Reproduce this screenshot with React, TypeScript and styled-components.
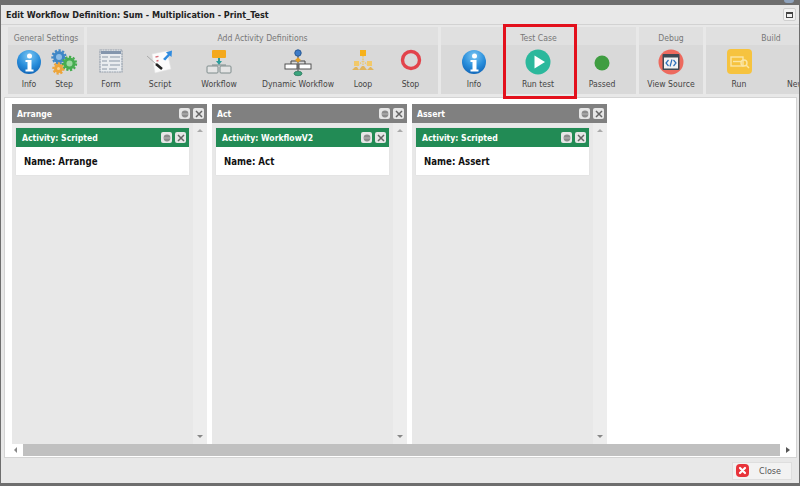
import React from "react";
import styled, { createGlobalStyle } from "styled-components";

const Global = createGlobalStyle`
  html, body {
    margin: 0;
    padding: 0;
    width: 800px;
    height: 486px;
    overflow: hidden;
    background: #6e6e6e;
    font-family: "DejaVu Sans Condensed", "DejaVu Sans", Verdana, sans-serif;
    font-stretch: condensed;
  }
`;

const Page = styled.div`
  position: relative;
  width: 800px;
  height: 486px;
  overflow: hidden;
  display: flex;
  flex-direction: column;
  background: #6e6e6e;
`;

const TopEdge = styled.div`
  height: 5px;
  flex: none;
  display: flex;
  justify-content: flex-end;
  padding-right: 6px;
  &::after {
    content: "";
    width: 10px;
    height: 3px;
    background: #8fa3bd;
    border-radius: 0 0 4px 4px;
  }
`;

const Dialog = styled.div`
  width: 798px;
  height: 478px;
  margin-left: 1px;
  flex: none;
  display: flex;
  flex-direction: column;
  background: #e8e8e8;
  overflow: hidden;
`;

const TitleBar = styled.div`
  height: 19px;
  flex: none;
  display: flex;
  align-items: center;
  justify-content: space-between;
  padding: 0 3px 0 5px;
  border-bottom: 1px solid #d2d2d2;
`;

const Title = styled.div`
  font-weight: bold;
  font-size: 9px;
  color: #222;
`;

const MaxButton = styled.div`
  width: 11px;
  height: 11px;
  display: flex;
  align-items: center;
  justify-content: center;
  background: #f2f2f2;
  border: 1px solid #cfcfcf;
  border-radius: 2px;
  &::after {
    content: "";
    width: 5px;
    height: 3px;
    border: 1px solid #444;
    border-top-width: 2px;
  }
`;

const Toolbar = styled.div`
  display: flex;
  flex: none;
  gap: 3px;
  height: 67px;
  margin: 2px 0 3px 7px;
  width: 900px;
`;

const Group = styled.div<{ $w: number }>`
  width: ${(p) => p.$w}px;
  flex: none;
  background: #e0e0e0;
  display: flex;
  flex-direction: column;
`;

const GroupTitle = styled.div`
  height: 18px;
  line-height: 22px;
  text-align: center;
  font-size: 8.6px;
  color: #777;
`;

const GroupBody = styled.div`
  flex: 1;
  display: flex;
  background: #d9d9d9;
`;

const Tool = styled.div<{ $w: number }>`
  width: ${(p) => p.$w}px;
  flex: none;
  display: flex;
  flex-direction: column;
  align-items: center;
  justify-content: space-between;
  padding: 4px 0 4px;
  box-sizing: border-box;
  svg {
    display: block;
  }
`;

const ToolLabel = styled.div`
  font-size: 8.6px;
  line-height: 12px;
  color: #444;
  white-space: nowrap;
`;

const Highlight = styled.div`
  position: absolute;
  left: 503px;
  top: 24px;
  width: 68px;
  height: 69px;
  border: 3px solid #e3101c;
`;

const Workspace = styled.div`
  flex: 1;
  margin: 0 2px 0 3px;
  background: #fff;
  border: 1px solid #d4d4d4;
  display: flex;
  flex-direction: column;
  min-height: 0;
`;

const Columns = styled.div`
  flex: 1;
  display: flex;
  gap: 5px;
  padding: 6px 0 0 7px;
  min-height: 0;
`;

const Column = styled.div`
  width: 195px;
  display: flex;
  flex-direction: column;
  background: #e8e8e8;
`;

const ColumnHead = styled.div<{ $green?: boolean }>`
  height: 19px;
  flex: none;
  display: flex;
  align-items: center;
  justify-content: space-between;
  padding: 0 3px 0 ${(p) => (p.$green ? 6 : 5)}px;
  background: ${(p) => (p.$green ? "#228b55" : "#808080")};
  color: #fff;
  font-weight: bold;
  font-size: 8.6px;
`;

const HeadButtons = styled.div`
  display: flex;
  gap: 3px;
`;

const HeadButton = styled.div`
  width: 11px;
  height: 11px;
  border-radius: 2px;
  background: #e6e6e6;
  display: flex;
  align-items: center;
  justify-content: center;
  svg {
    display: block;
  }
`;

const ColumnBody = styled.div`
  flex: 1;
  display: flex;
  min-height: 0;
`;

const ColumnInner = styled.div`
  width: 173px;
  padding: 5px 0 0 4px;
`;

const Card = styled.div`
  background: #fff;
  box-shadow: 0 0 1px #cfcfcf;
`;

const CardBody = styled.div`
  height: 28px;
  line-height: 29px;
  padding-left: 8px;
  font-weight: bold;
  font-size: 9.6px;
  color: #111;
`;

const VScroll = styled.div`
  margin-left: 4px;
  width: 14px;
  background: #ededed;
  display: flex;
  flex-direction: column;
  align-items: center;
  justify-content: space-between;
  padding: 6px 0;
`;

const Arrow = styled.div<{ $dir: "up" | "down" | "left" | "right" }>`
  width: 0;
  height: 0;
  border-style: solid;
  border-color: transparent;
  ${(p) =>
    p.$dir === "up"
      ? "border-width: 0 3px 3px; border-bottom-color: #aaa;"
      : p.$dir === "down"
      ? "border-width: 3px 3px 0; border-top-color: #888;"
      : p.$dir === "left"
      ? "border-width: 3px 3px 3px 0; border-right-color: #888;"
      : "border-width: 3px 0 3px 4px; border-left-color: #555;"}
`;

const HScroll = styled.div`
  height: 12px;
  flex: none;
  margin-bottom: 1px;
  display: flex;
  align-items: center;
  padding: 0 6px 0 9px;
  gap: 6px;
`;

const HThumb = styled.div`
  flex: 1;
  height: 12px;
  background: #c0c0c0;
`;

const Footer = styled.div`
  height: 25px;
  flex: none;
  display: flex;
  align-items: center;
  justify-content: flex-end;
  padding: 0 7px 0 0;
`;

const CloseButton = styled.div`
  width: 60px;
  height: 18px;
  box-sizing: border-box;
  display: flex;
  align-items: center;
  gap: 10px;
  padding-left: 3px;
  background: #f2f2f2;
  border: 1px solid #dedede;
  font-size: 9px;
  color: #555;
`;

const InfoIcon = () => (
  <svg width="26" height="26" viewBox="0 0 26 26">
    <defs>
      <radialGradient id="ib" cx="0.5" cy="0.25" r="0.8">
        <stop offset="0" stopColor="#7cc6f2" />
        <stop offset="0.55" stopColor="#2a8fdc" />
        <stop offset="1" stopColor="#0f62b4" />
      </radialGradient>
    </defs>
    <circle cx="13" cy="13" r="12" fill="url(#ib)" />
    <circle cx="13.5" cy="7" r="2.5" fill="#fff" />
    <path d="M9.5 11h6v9.5h2v2h-8v-2h2v-7.500h-2z" fill="#fff" />
  </svg>
);

const Gear = ({ x, y, r, c, hub }: { x: number; y: number; r: number; c: string; hub: string }) => (
  <g>
    <circle cx={x} cy={y} r={r + 0.6} fill="none" stroke={c} strokeWidth="2.2" strokeDasharray="2.2 1.6" />
    <circle cx={x} cy={y} r={r} fill={c} />
    <circle cx={x} cy={y} r={r - 3} fill={hub} />
  </g>
);

const StepIcon = () => (
  <svg width="28" height="26" viewBox="0 0 28 26">
    <Gear x={9} y={8} r={6} c="#3f87c6" hub="#8dbde6" />
    <Gear x={8.500} y={19.500} r={4.500} c="#eda53a" hub="#f7d596" />
    <Gear x={19.5} y={14.500} r={6} c="#46ad4f" hub="#9bd8a0" />
  </svg>
);

const FormIcon = () => (
  <svg width="24" height="24" viewBox="0 0 24 24">
    <rect x="1" y="1" width="22" height="22" fill="#e9ecef" stroke="#97a1ae" strokeWidth="1.2" strokeDasharray="2 .5" />
    <rect x="2" y="2" width="20" height="3" fill="#8496ad" />
    <path d="M3 8h6M11 8h10M3 12h5M10 12h11M3 16h6M11 16h10M3 20h5M10 20h8" stroke="#8a97a6" strokeWidth="1" />
  </svg>
);

const ScriptIcon = () => (
  <svg width="28" height="26" viewBox="0 0 28 26">
    <path d="M6 5l15-3 4 18-16 4z" fill="#fbfbfb" stroke="#e2e2e2" strokeWidth=".6" />
    <path d="M9.500 8l3-.7M10.500 12l2-.5" stroke="#d9707a" strokeWidth="1.300" />
    <path d="M1 7l9 8" stroke="#aaa" strokeWidth="1" />
    <path d="M10 15l6 5" stroke="#222" strokeWidth="2.600" />
    <path d="M17 10l5-5-2.200-1.500 6.200-2-.5 6.500-1.700-1.600-4.600 5.100z" fill="#2f8be0" />
  </svg>
);

const WorkflowIcon = () => (
  <svg width="28" height="26" viewBox="0 0 28 26">
    <rect x="7" y="1" width="14" height="8" rx="1" fill="#f4a91e" />
    <path d="M14 9v5" stroke="#2a9d9b" strokeWidth="2" />
    <path d="M11 12h6l-3 4z" fill="#2a9d9b" />
    <path d="M7 16h14" stroke="#7b8a8a" strokeWidth="1" />
    <rect x="2" y="17" width="11" height="7" rx="1" fill="#e4e4e4" stroke="#7f8c8c" />
    <rect x="15" y="17" width="11" height="7" rx="1" fill="#e4e4e4" stroke="#7f8c8c" />
  </svg>
);

const DynamicIcon = () => (
  <svg width="28" height="28" viewBox="0 0 28 28">
    <path d="M14 7v15M7 12h14M7 12v3M21 12v3" stroke="#444" strokeWidth="1" fill="none" />
    <circle cx="14" cy="4" r="3.200" fill="#3d7cc9" stroke="#2a5a93" />
    <path d="M14 8.500l3 2.500-3 2.500-3-2.500z" fill="#e6a024" />
    <rect x="1" y="15" width="12" height="5" fill="#fff" stroke="#444" strokeWidth=".9" />
    <rect x="15" y="15" width="12" height="5" fill="#fff" stroke="#444" strokeWidth=".9" />
    <ellipse cx="14" cy="24.500" rx="4" ry="2.200" fill="#3ca57e" stroke="#267257" strokeWidth=".7" />
  </svg>
);

const LoopIcon = () => (
  <svg width="24" height="24" viewBox="0 0 24 24">
    <rect x="9" y="1" width="6" height="6" fill="#f7b21b" />
    <path d="M12 7v5M12 12L6 17M12 12l6 5M12 12v8" stroke="#e8c97a" strokeWidth="1.500" strokeDasharray="1.500 1" fill="none" />
    <rect x="3" y="12" width="5" height="5" fill="#f2c96a" />
    <rect x="16" y="12" width="5" height="5" fill="#f2c96a" />
    <path d="M1 21l3-3h2l2 3zM8 21l3-4h2l3 4zM16 21l3-3h1l3 3z" fill="#e2b65c" />
  </svg>
);

const StopIcon = () => (
  <svg width="22" height="22" viewBox="0 0 22 22">
    <circle cx="11" cy="11" r="8.500" fill="none" stroke="#e2434b" strokeWidth="3.400" />
  </svg>
);

const RunIcon = () => (
  <svg width="26" height="26" viewBox="0 0 26 26">
    <circle cx="13" cy="13" r="12.500" fill="#2bb89c" />
    <path d="M9.500 6.500L20 13 9.500 19.500z" fill="#fff" />
  </svg>
);

const PassedIcon = () => (
  <svg width="26" height="26" viewBox="0 0 26 26">
    <circle cx="13" cy="14" r="7.500" fill="#3f9d41" />
  </svg>
);

const SourceIcon = () => (
  <svg width="26" height="26" viewBox="0 0 26 26">
    <circle cx="13" cy="13" r="12.500" fill="#ed6a5e" />
    <rect x="4.500" y="5" width="17" height="16" rx="1" fill="#3e4a55" />
    <rect x="6" y="8.500" width="14" height="11" fill="#f2f2f2" />
    <path d="M10.500 11l-2.500 3 2.500 3M15.500 11l2.500 3-2.500 3" stroke="#2c6fbb" strokeWidth="1.200" fill="none" />
    <path d="M14 10.500l-2 7" stroke="#2c6fbb" strokeWidth="1.200" />
  </svg>
);

const BuildRunIcon = () => (
  <svg width="25" height="25" viewBox="0 0 25 25">
    <rect width="25" height="25" rx="4" fill="#f6c33f" />
    <rect x="4" y="8" width="12" height="9" fill="none" stroke="#fbe6a5" strokeWidth="1.400" />
    <path d="M6 12.500h8" stroke="#fbe6a5" strokeWidth="1.400" />
    <circle cx="17" cy="14" r="3" fill="none" stroke="#fbe6a5" strokeWidth="1.400" />
    <path d="M19 16l3 3" stroke="#fbe6a5" strokeWidth="1.400" />
  </svg>
);

const NewIcon = () => <svg width="25" height="25" viewBox="0 0 25 25" />;

const CloseIcon = () => (
  <svg width="13" height="13" viewBox="0 0 13 13">
    <rect width="13" height="13" rx="4" fill="#e8333a" />
    <path d="M4 4l5 5M9 4l-5 5" stroke="#fff" strokeWidth="2.200" strokeLinecap="round" />
  </svg>
);

const SettingsGlyph = () => (
  <svg width="8" height="8" viewBox="0 0 8 8">
    <circle cx="4" cy="4" r="3.400" fill="#8c8c8c" />
    <path d="M1 4h6" stroke="#c4c4c4" strokeWidth=".8" />
  </svg>
);

const CrossGlyph = () => (
  <svg width="8" height="8" viewBox="0 0 8 8">
    <path d="M1 1l6 6M7 1L1 7" stroke="#666" strokeWidth="1.500" />
  </svg>
);

const PanelButtons = () => (
  <HeadButtons>
    <HeadButton>
      <SettingsGlyph />
    </HeadButton>
    <HeadButton>
      <CrossGlyph />
    </HeadButton>
  </HeadButtons>
);

type ToolDef = { label: string; w: number; icon: React.ReactNode };
type GroupDef = { title: string; w: number; tools: ToolDef[] };

const groups: GroupDef[] = [
  {
    title: "General Settings",
    w: 76,
    tools: [
      { label: "Info", w: 42, icon: <InfoIcon /> },
      { label: "Step", w: 28, icon: <StepIcon /> },
    ],
  },
  {
    title: "Add Activity Definitions",
    w: 351,
    tools: [
      { label: "Form", w: 48, icon: <FormIcon /> },
      { label: "Script", w: 50, icon: <ScriptIcon /> },
      { label: "Workflow", w: 68, icon: <WorkflowIcon /> },
      { label: "Dynamic Workflow", w: 90, icon: <DynamicIcon /> },
      { label: "Loop", w: 40, icon: <LoopIcon /> },
      { label: "Stop", w: 55, icon: <StopIcon /> },
    ],
  },
  {
    title: "Test Case",
    w: 195,
    tools: [
      { label: "Info", w: 66, icon: <InfoIcon /> },
      { label: "Run test", w: 62, icon: <RunIcon /> },
      { label: "Passed", w: 66, icon: <PassedIcon /> },
    ],
  },
  {
    title: "Debug",
    w: 64,
    tools: [{ label: "View Source", w: 64, icon: <SourceIcon /> }],
  },
  {
    title: "Build",
    w: 130,
    tools: [
      { label: "Run", w: 66, icon: <BuildRunIcon /> },
      { label: "New Run", w: 64, icon: <NewIcon /> },
    ],
  },
];

const columns = [
  { title: "Arrange", activity: "Activity: Scripted", name: "Name: Arrange" },
  { title: "Act", activity: "Activity: WorkflowV2", name: "Name: Act" },
  { title: "Assert", activity: "Activity: Scripted", name: "Name: Assert" },
];

export default function App() {
  return (
    <Page>
      <Global />
      <TopEdge />
      <Dialog>
        <TitleBar>
          <Title>Edit Workflow Definition: Sum - Multiplication - Print_Test</Title>
          <MaxButton />
        </TitleBar>
        <Toolbar>
          {groups.map((g) => (
            <Group key={g.title} $w={g.w}>
              <GroupTitle>{g.title}</GroupTitle>
              <GroupBody>
                {g.tools.map((t) => (
                  <Tool key={t.label} $w={t.w}>
                    {t.icon}
                    <ToolLabel>{t.label}</ToolLabel>
                  </Tool>
                ))}
              </GroupBody>
            </Group>
          ))}
        </Toolbar>
        <Workspace>
          <Columns>
            {columns.map((c) => (
              <Column key={c.title}>
                <ColumnHead>
                  {c.title}
                  <PanelButtons />
                </ColumnHead>
                <ColumnBody>
                  <ColumnInner>
                    <Card>
                      <ColumnHead $green>
                        {c.activity}
                        <PanelButtons />
                      </ColumnHead>
                      <CardBody>{c.name}</CardBody>
                    </Card>
                  </ColumnInner>
                  <VScroll>
                    <Arrow $dir="up" />
                    <Arrow $dir="down" />
                  </VScroll>
                </ColumnBody>
              </Column>
            ))}
          </Columns>
          <HScroll>
            <Arrow $dir="left" />
            <HThumb />
            <Arrow $dir="right" />
          </HScroll>
        </Workspace>
        <Footer>
          <CloseButton>
            <CloseIcon />
            Close
          </CloseButton>
        </Footer>
      </Dialog>
      <Highlight />
    </Page>
  );
}
